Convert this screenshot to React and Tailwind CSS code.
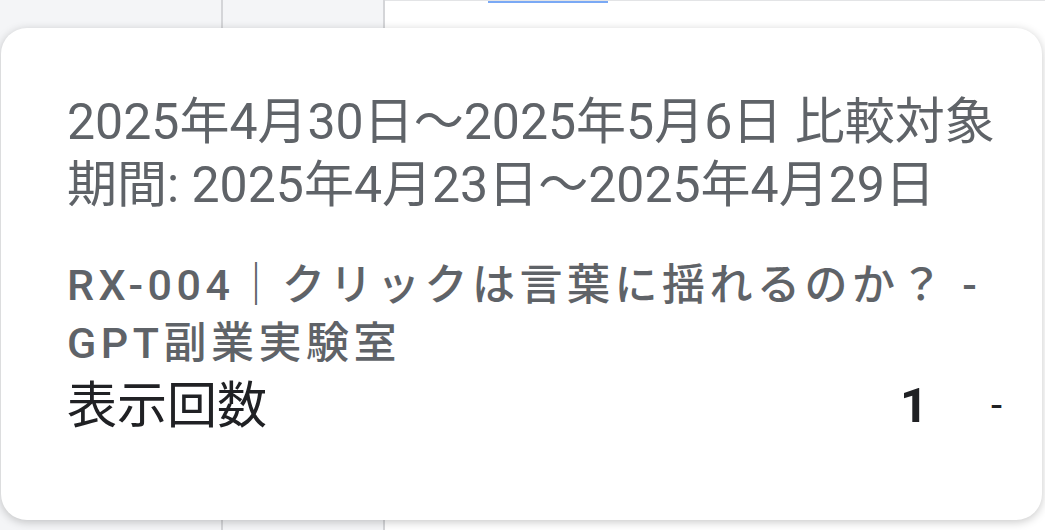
import React from 'react';

const font = { fontFamily: 'Roboto, "Noto Sans CJK JP", sans-serif' };

const App = () => {
  return (
    <div className="relative w-[1045px] h-[530px] overflow-hidden bg-white" style={font}>
      {/* Background table behind the tooltip */}
      <div className="flex h-full">
        <div className="w-[223px] h-full bg-[#f4f5f7] border-r-2 border-[#d4d5d8]" />
        <div className="w-[162px] h-full bg-[#f4f5f7] border-r-2 border-[#d4d5d8]" />
        <div className="flex-1 h-full bg-white border-t border-[#e3e4e6]">
          <div className="ml-[103px] w-[120px] h-[2px] bg-[#7aa9f5]" />
        </div>
      </div>

      {/* Tooltip card */}
      <div className="absolute left-[1px] right-[3px] top-[28px] h-[492px] rounded-[26px] bg-white shadow-[0_2px_10px_rgba(0,0,0,0.22)] pl-[66px] pr-[40px] pt-[63px]">
        {/* Date range */}
        <p className="text-[50px] leading-[63px] text-[#5f6368] whitespace-nowrap">
          2025年4月30日～2025年5月6日 比較対象
          <br />
          期間: 2025年4月23日～2025年4月29日
        </p>

        {/* Page title */}
        <p className="mt-[39px] pr-[10px] text-[43px] leading-[58px] font-medium tracking-[0.105em] text-[#5f6368]">
          RX-004｜クリックは言葉に揺れるのか？ - GPT副業実験室
        </p>

        {/* Metric row */}
        <div className="mt-[6px] flex items-center h-[56px]">
          <span className="flex-1 text-[50px] text-[#202124]">表示回数</span>
          <span className="text-[49px] font-bold text-[#202124]">1</span>
          <span className="w-[74px] text-right text-[40px] text-[#202124]">-</span>
        </div>
      </div>
    </div>
  );
};

export default App;
